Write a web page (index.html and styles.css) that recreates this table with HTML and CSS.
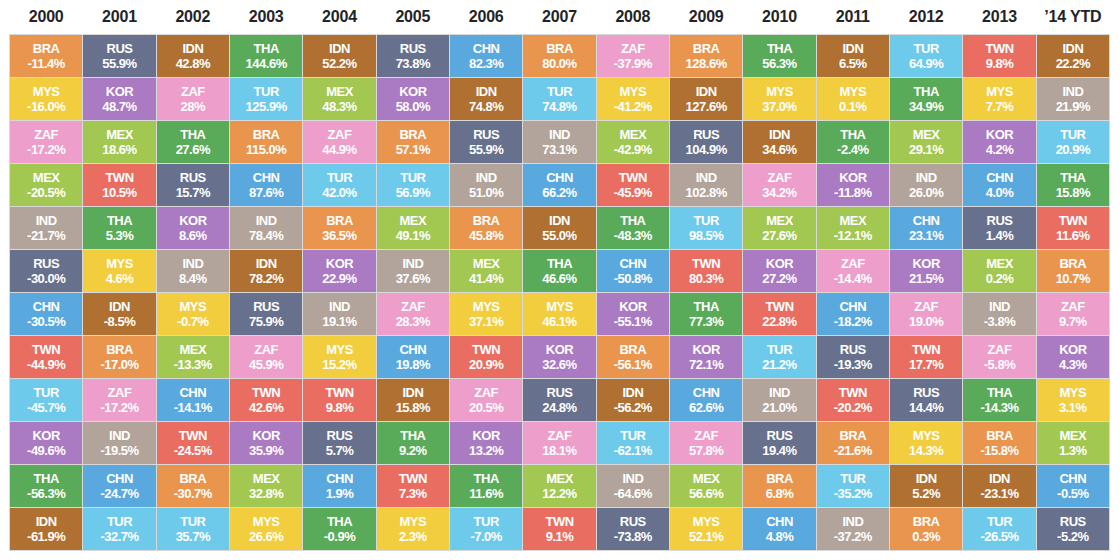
FILE: index.html
```html
<!DOCTYPE html>
<html lang="en">
<head>
<meta charset="utf-8">
<title>Emerging Markets Annual Returns</title>
<link rel="stylesheet" href="styles.css">
</head>
<body>
<div class="chart">
  <div class="years">
    <div>2000</div><div>2001</div><div>2002</div><div>2003</div><div>2004</div><div>2005</div><div>2006</div><div>2007</div><div>2008</div><div>2009</div><div>2010</div><div>2011</div><div>2012</div><div>2013</div><div>’14 YTD</div>
  </div>
  <div class="grid">
    <!-- 2000 -->
    <div class="cell bra">BRA<br>-11.4%</div>
    <div class="cell mys">MYS<br>-16.0%</div>
    <div class="cell zaf">ZAF<br>-17.2%</div>
    <div class="cell mex">MEX<br>-20.5%</div>
    <div class="cell ind">IND<br>-21.7%</div>
    <div class="cell rus">RUS<br>-30.0%</div>
    <div class="cell chn">CHN<br>-30.5%</div>
    <div class="cell twn">TWN<br>-44.9%</div>
    <div class="cell tur">TUR<br>-45.7%</div>
    <div class="cell kor">KOR<br>-49.6%</div>
    <div class="cell tha">THA<br>-56.3%</div>
    <div class="cell idn">IDN<br>-61.9%</div>
    <!-- 2001 -->
    <div class="cell rus">RUS<br>55.9%</div>
    <div class="cell kor">KOR<br>48.7%</div>
    <div class="cell mex">MEX<br>18.6%</div>
    <div class="cell twn">TWN<br>10.5%</div>
    <div class="cell tha">THA<br>5.3%</div>
    <div class="cell mys">MYS<br>4.6%</div>
    <div class="cell idn">IDN<br>-8.5%</div>
    <div class="cell bra">BRA<br>-17.0%</div>
    <div class="cell zaf">ZAF<br>-17.2%</div>
    <div class="cell ind">IND<br>-19.5%</div>
    <div class="cell chn">CHN<br>-24.7%</div>
    <div class="cell tur">TUR<br>-32.7%</div>
    <!-- 2002 -->
    <div class="cell idn">IDN<br>42.8%</div>
    <div class="cell zaf">ZAF<br>28%</div>
    <div class="cell tha">THA<br>27.6%</div>
    <div class="cell rus">RUS<br>15.7%</div>
    <div class="cell kor">KOR<br>8.6%</div>
    <div class="cell ind">IND<br>8.4%</div>
    <div class="cell mys">MYS<br>-0.7%</div>
    <div class="cell mex">MEX<br>-13.3%</div>
    <div class="cell chn">CHN<br>-14.1%</div>
    <div class="cell twn">TWN<br>-24.5%</div>
    <div class="cell bra">BRA<br>-30.7%</div>
    <div class="cell tur">TUR<br>35.7%</div>
    <!-- 2003 -->
    <div class="cell tha">THA<br>144.6%</div>
    <div class="cell tur">TUR<br>125.9%</div>
    <div class="cell bra">BRA<br>115.0%</div>
    <div class="cell chn">CHN<br>87.6%</div>
    <div class="cell ind">IND<br>78.4%</div>
    <div class="cell idn">IDN<br>78.2%</div>
    <div class="cell rus">RUS<br>75.9%</div>
    <div class="cell zaf">ZAF<br>45.9%</div>
    <div class="cell twn">TWN<br>42.6%</div>
    <div class="cell kor">KOR<br>35.9%</div>
    <div class="cell mex">MEX<br>32.8%</div>
    <div class="cell mys">MYS<br>26.6%</div>
    <!-- 2004 -->
    <div class="cell idn">IDN<br>52.2%</div>
    <div class="cell mex">MEX<br>48.3%</div>
    <div class="cell zaf">ZAF<br>44.9%</div>
    <div class="cell tur">TUR<br>42.0%</div>
    <div class="cell bra">BRA<br>36.5%</div>
    <div class="cell kor">KOR<br>22.9%</div>
    <div class="cell ind">IND<br>19.1%</div>
    <div class="cell mys">MYS<br>15.2%</div>
    <div class="cell twn">TWN<br>9.8%</div>
    <div class="cell rus">RUS<br>5.7%</div>
    <div class="cell chn">CHN<br>1.9%</div>
    <div class="cell tha">THA<br>-0.9%</div>
    <!-- 2005 -->
    <div class="cell rus">RUS<br>73.8%</div>
    <div class="cell kor">KOR<br>58.0%</div>
    <div class="cell bra">BRA<br>57.1%</div>
    <div class="cell tur">TUR<br>56.9%</div>
    <div class="cell mex">MEX<br>49.1%</div>
    <div class="cell ind">IND<br>37.6%</div>
    <div class="cell zaf">ZAF<br>28.3%</div>
    <div class="cell chn">CHN<br>19.8%</div>
    <div class="cell idn">IDN<br>15.8%</div>
    <div class="cell tha">THA<br>9.2%</div>
    <div class="cell twn">TWN<br>7.3%</div>
    <div class="cell mys">MYS<br>2.3%</div>
    <!-- 2006 -->
    <div class="cell chn">CHN<br>82.3%</div>
    <div class="cell idn">IDN<br>74.8%</div>
    <div class="cell rus">RUS<br>55.9%</div>
    <div class="cell ind">IND<br>51.0%</div>
    <div class="cell bra">BRA<br>45.8%</div>
    <div class="cell mex">MEX<br>41.4%</div>
    <div class="cell mys">MYS<br>37.1%</div>
    <div class="cell twn">TWN<br>20.9%</div>
    <div class="cell zaf">ZAF<br>20.5%</div>
    <div class="cell kor">KOR<br>13.2%</div>
    <div class="cell tha">THA<br>11.6%</div>
    <div class="cell tur">TUR<br>-7.0%</div>
    <!-- 2007 -->
    <div class="cell bra">BRA<br>80.0%</div>
    <div class="cell tur">TUR<br>74.8%</div>
    <div class="cell ind">IND<br>73.1%</div>
    <div class="cell chn">CHN<br>66.2%</div>
    <div class="cell idn">IDN<br>55.0%</div>
    <div class="cell tha">THA<br>46.6%</div>
    <div class="cell mys">MYS<br>46.1%</div>
    <div class="cell kor">KOR<br>32.6%</div>
    <div class="cell rus">RUS<br>24.8%</div>
    <div class="cell zaf">ZAF<br>18.1%</div>
    <div class="cell mex">MEX<br>12.2%</div>
    <div class="cell twn">TWN<br>9.1%</div>
    <!-- 2008 -->
    <div class="cell zaf">ZAF<br>-37.9%</div>
    <div class="cell mys">MYS<br>-41.2%</div>
    <div class="cell mex">MEX<br>-42.9%</div>
    <div class="cell twn">TWN<br>-45.9%</div>
    <div class="cell tha">THA<br>-48.3%</div>
    <div class="cell chn">CHN<br>-50.8%</div>
    <div class="cell kor">KOR<br>-55.1%</div>
    <div class="cell bra">BRA<br>-56.1%</div>
    <div class="cell idn">IDN<br>-56.2%</div>
    <div class="cell tur">TUR<br>-62.1%</div>
    <div class="cell ind">IND<br>-64.6%</div>
    <div class="cell rus">RUS<br>-73.8%</div>
    <!-- 2009 -->
    <div class="cell bra">BRA<br>128.6%</div>
    <div class="cell idn">IDN<br>127.6%</div>
    <div class="cell rus">RUS<br>104.9%</div>
    <div class="cell ind">IND<br>102.8%</div>
    <div class="cell tur">TUR<br>98.5%</div>
    <div class="cell twn">TWN<br>80.3%</div>
    <div class="cell tha">THA<br>77.3%</div>
    <div class="cell kor">KOR<br>72.1%</div>
    <div class="cell chn">CHN<br>62.6%</div>
    <div class="cell zaf">ZAF<br>57.8%</div>
    <div class="cell mex">MEX<br>56.6%</div>
    <div class="cell mys">MYS<br>52.1%</div>
    <!-- 2010 -->
    <div class="cell tha">THA<br>56.3%</div>
    <div class="cell mys">MYS<br>37.0%</div>
    <div class="cell idn">IDN<br>34.6%</div>
    <div class="cell zaf">ZAF<br>34.2%</div>
    <div class="cell mex">MEX<br>27.6%</div>
    <div class="cell kor">KOR<br>27.2%</div>
    <div class="cell twn">TWN<br>22.8%</div>
    <div class="cell tur">TUR<br>21.2%</div>
    <div class="cell ind">IND<br>21.0%</div>
    <div class="cell rus">RUS<br>19.4%</div>
    <div class="cell bra">BRA<br>6.8%</div>
    <div class="cell chn">CHN<br>4.8%</div>
    <!-- 2011 -->
    <div class="cell idn">IDN<br>6.5%</div>
    <div class="cell mys">MYS<br>0.1%</div>
    <div class="cell tha">THA<br>-2.4%</div>
    <div class="cell kor">KOR<br>-11.8%</div>
    <div class="cell mex">MEX<br>-12.1%</div>
    <div class="cell zaf">ZAF<br>-14.4%</div>
    <div class="cell chn">CHN<br>-18.2%</div>
    <div class="cell rus">RUS<br>-19.3%</div>
    <div class="cell twn">TWN<br>-20.2%</div>
    <div class="cell bra">BRA<br>-21.6%</div>
    <div class="cell tur">TUR<br>-35.2%</div>
    <div class="cell ind">IND<br>-37.2%</div>
    <!-- 2012 -->
    <div class="cell tur">TUR<br>64.9%</div>
    <div class="cell tha">THA<br>34.9%</div>
    <div class="cell mex">MEX<br>29.1%</div>
    <div class="cell ind">IND<br>26.0%</div>
    <div class="cell chn">CHN<br>23.1%</div>
    <div class="cell kor">KOR<br>21.5%</div>
    <div class="cell zaf">ZAF<br>19.0%</div>
    <div class="cell twn">TWN<br>17.7%</div>
    <div class="cell rus">RUS<br>14.4%</div>
    <div class="cell mys">MYS<br>14.3%</div>
    <div class="cell idn">IDN<br>5.2%</div>
    <div class="cell bra">BRA<br>0.3%</div>
    <!-- 2013 -->
    <div class="cell twn">TWN<br>9.8%</div>
    <div class="cell mys">MYS<br>7.7%</div>
    <div class="cell kor">KOR<br>4.2%</div>
    <div class="cell chn">CHN<br>4.0%</div>
    <div class="cell rus">RUS<br>1.4%</div>
    <div class="cell mex">MEX<br>0.2%</div>
    <div class="cell ind">IND<br>-3.8%</div>
    <div class="cell zaf">ZAF<br>-5.8%</div>
    <div class="cell tha">THA<br>-14.3%</div>
    <div class="cell bra">BRA<br>-15.8%</div>
    <div class="cell idn">IDN<br>-23.1%</div>
    <div class="cell tur">TUR<br>-26.5%</div>
    <!-- '14 YTD -->
    <div class="cell idn">IDN<br>22.2%</div>
    <div class="cell ind">IND<br>21.9%</div>
    <div class="cell tur">TUR<br>20.9%</div>
    <div class="cell tha">THA<br>15.8%</div>
    <div class="cell twn">TWN<br>11.6%</div>
    <div class="cell bra">BRA<br>10.7%</div>
    <div class="cell zaf">ZAF<br>9.7%</div>
    <div class="cell kor">KOR<br>4.3%</div>
    <div class="cell mys">MYS<br>3.1%</div>
    <div class="cell mex">MEX<br>1.3%</div>
    <div class="cell chn">CHN<br>-0.5%</div>
    <div class="cell rus">RUS<br>-5.2%</div>
  </div>
</div>
</body>
</html>
```
FILE: styles.css
```css
html, body {
  margin: 0;
  padding: 0;
  background: #ffffff;
}

body {
  font-family: "Liberation Sans", Arial, sans-serif;
}

.chart {
  margin-left: 9px;
  width: 1101px;
}

.years {
  display: grid;
  grid-template-columns: repeat(15, 1fr);
  column-gap: 1px;
  padding: 0 1px;
  height: 34px;
  align-items: center;
  text-align: center;
  font-weight: bold;
  font-size: 16px;
  color: #222428;
  letter-spacing: -0.2px;
}

.grid {
  display: grid;
  grid-template-columns: repeat(15, 1fr);
  grid-template-rows: repeat(12, 42px);
  grid-auto-flow: column;
  gap: 1px;
  padding: 1px;
  background: #d9d9d9;
}

.cell {
  display: flex;
  flex-direction: column;
  justify-content: center;
  align-items: center;
  text-align: center;
  color: #ffffff;
  font-weight: bold;
  font-size: 13px;
  line-height: 15px;
  letter-spacing: -0.5px;
}

.bra { background: #e9954e; }
.rus { background: #67718e; }
.idn { background: #b07032; }
.tha { background: #59ab5a; }
.mys { background: #f2cd3e; }
.kor { background: #aa7ac3; }
.zaf { background: #ed9ecb; }
.tur { background: #6ecaeb; }
.mex { background: #a2c852; }
.chn { background: #59a9df; }
.ind { background: #b3a49b; }
.twn { background: #ea6d62; }
```
